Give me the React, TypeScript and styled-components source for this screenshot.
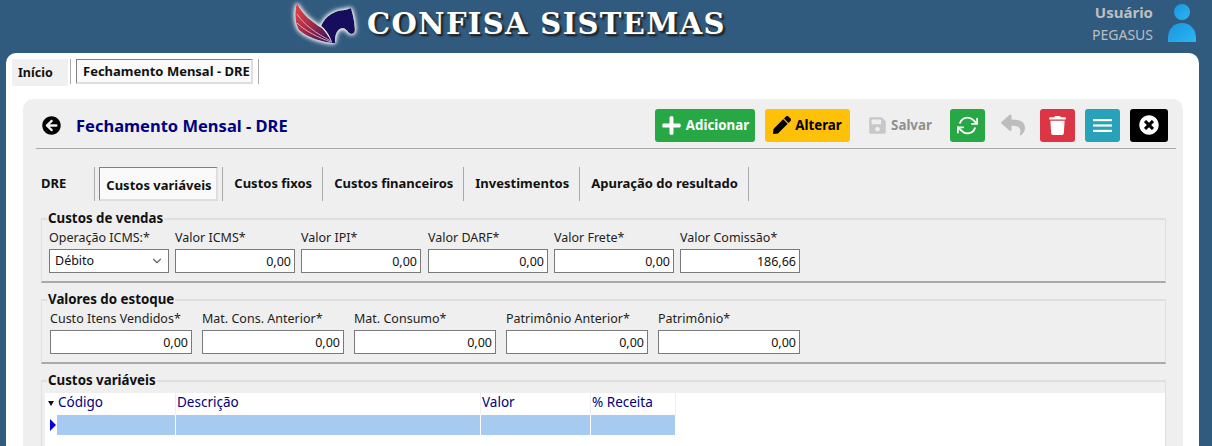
import React from "react";
import styled, { createGlobalStyle } from "styled-components";
import { FaArrowCircleLeft, FaPen, FaPlus, FaReply, FaSave, FaTimesCircle, FaTrash } from "react-icons/fa";
import { FiChevronDown, FiRefreshCw } from "react-icons/fi";

const uiFont = `"Noto Sans", "DejaVu Sans", sans-serif`;

const GlobalStyle = createGlobalStyle`
  html, body {
    margin: 0;
    height: 446px;
    overflow: hidden;
    background: #305a7e;
    font-family: ${uiFont};
  }
  * { box-sizing: border-box; }
`;

const Page = styled.div`
  width: 1212px;
  height: 446px;
  overflow: hidden;
  background: #305a7e;
`;

const Header = styled.header`
  display: flex;
  height: 53px;
  padding-left: 285px;
`;

const Brand = styled.div`
  display: flex;
  align-items: center;
  gap: 2px;
  width: 747px;
  height: 50px;
`;

const BrandName = styled.span`
  font-family: "DejaVu Serif", "Liberation Serif", serif;
  font-size: 29px;
  font-weight: bold;
  letter-spacing: 1.35px;
  color: #fff;
  margin-top: -2px;
  white-space: nowrap;
  text-shadow: 1px 1px 0 #333, 2px 2px 2px #111;
`;

const UserArea = styled.div`
  display: flex;
  margin-left: 60px;
  padding-top: 1px;
  gap: 15px;
`;

const UserText = styled.div`
  width: 61px;
  text-align: right;
  color: #bdbfc1;
  font-size: 14px;
  line-height: 22px;
  white-space: nowrap;
  display: flex;
  flex-direction: column;
  align-items: flex-end;
`;

const UserLabel = styled.strong`
  font-size: 15px;
`;

const UserName = styled.span`
  margin-top: 1px;
`;

const Sheet = styled.main`
  width: 1193px;
  height: 393px;
  margin-left: 6px;
  background: #fff;
  border-radius: 10px 10px 0 0;
  padding: 6px 16px 0 6px;
`;

const TabBar = styled.div`
  display: flex;
  align-items: flex-start;
  height: 40px;
`;

const PlainTab = styled.div`
  display: flex;
  align-items: center;
  width: 56px;
  height: 27px;
  padding-left: 6px;
  font-size: 12.5px;
  font-weight: bold;
  color: #111;
  background: #f0f0f0;
`;

const ActiveTab = styled.div`
  display: flex;
  align-items: center;
  width: 177px;
  height: 25px;
  padding-left: 6px;
  font-size: 13px;
  font-weight: bold;
  color: #111;
  white-space: nowrap;
  background: #fafafa;
  border: solid;
  border-width: 1px 2px 2px 1px;
  border-color: #7f7f7f #dedede #dedede #7f7f7f;
`;

const TabSeparator = styled.span`
  width: 1px;
  height: 25px;
  margin: 0 5px 0 2px;
  background: #aaa;
`;

const EndSeparator = styled(TabSeparator)`
  margin-left: 5px;
`;

const Card = styled.section`
  width: 1160px;
  height: 360px;
  margin-left: 11px;
  background: #efefef;
  border-radius: 10px 10px 0 0;
  padding: 10px 7px 0 13px;
`;

const TitleRow = styled.div`
  display: flex;
  align-items: center;
  height: 40px;
  padding: 0 8px 7px 6px;
  border-bottom: 1px solid #a8a8a8;
`;

const BackIcon = styled(FaArrowCircleLeft)`
  width: 19px;
  height: 19px;
  color: #000;
`;

const Title = styled.h1`
  margin: 0 0 0 15px;
  font-size: 16.5px;
  font-weight: bold;
  color: #000080;
  white-space: nowrap;
`;

const Toolbar = styled.div`
  display: flex;
  gap: 10px;
  margin-left: auto;
`;

const ToolButton = styled.button<{ $bg: string; $fg: string; $w: number }>`
  display: flex;
  align-items: center;
  justify-content: center;
  gap: 4px;
  width: ${(p) => p.$w}px;
  height: 33px;
  padding: 0;
  border: 0;
  border-radius: 3px;
  background: ${(p) => p.$bg};
  color: ${(p) => p.$fg};
  font-family: ${uiFont};
  font-size: 13.3px;
  font-weight: bold;
  white-space: nowrap;
`;

const InnerTabs = styled.div`
  display: flex;
  align-items: center;
  height: 34px;
  margin: 18px 0 17px 5px;
`;

const PageTab = styled.div`
  margin-top: -2px;
  padding: 0 10px 0 11px;
  font-size: 13px;
  font-weight: bold;
  color: #111;
  white-space: nowrap;
`;

const FirstPageTab = styled(PageTab)`
  padding: 0 28px 0 0;
`;

const ActivePageTab = styled.div`
  display: flex;
  align-items: center;
  width: 119px;
  height: 34px;
  margin: 0 4px;
  padding: 2px 0 0 6px;
  font-size: 13px;
  font-weight: bold;
  color: #111;
  white-space: nowrap;
  background: #fafafa;
  border: solid;
  border-width: 1px 2px 2px 1px;
  border-color: #7f7f7f #dedede #dedede #7f7f7f;
`;

const PageSeparator = styled.span`
  width: 1px;
  height: 34px;
  background: #aaa;
`;

const Group = styled.fieldset<{ $h: number; $pl?: number }>`
  position: relative;
  width: 1125px;
  height: ${(p) => p.$h}px;
  margin: 0 0 16px 5px;
  padding: 10px 0 0 ${(p) => p.$pl ?? 8}px;
  border: 0;
  border-top: 2px solid #dfdfdf;
  border-left: 1px solid #dfdfdf;
  border-right: 1px solid #dfdfdf;
  border-bottom: 2px solid #a9a9a9;
  min-width: 0;
`;

const GroupTitle = styled.legend`
  position: absolute;
  top: -10px;
  left: 5px;
  padding: 0 1px;
  background: #efefef;
  font-size: 13.3px;
  line-height: 16px;
  font-weight: bold;
  color: #111;
  white-space: nowrap;
`;

const FieldRow = styled.div`
  display: flex;
  gap: 6px;
`;

const Field = styled.label<{ $w: number; $gap?: number }>`
  display: flex;
  flex-direction: column;
  width: ${(p) => p.$w}px;
  margin-right: ${(p) => p.$gap ?? 0}px;
  font-size: 12.5px;
  line-height: 16px;
  color: #222;
  white-space: nowrap;
`;

const NumberInput = styled.input`
  width: 100%;
  height: 24px;
  margin-top: 3px;
  padding: 0 3px;
  border: 1px solid #7a7a7a;
  background: #fff;
  color: #111;
  font-family: ${uiFont};
  font-size: 12.5px;
  text-align: right;
  outline: none;
`;

const SelectBox = styled.div`
  display: flex;
  align-items: center;
  justify-content: space-between;
  height: 24px;
  margin-top: 3px;
  padding: 0 4px 0 5px;
  border: 1px solid #7a7a7a;
  background: #fff;
  color: #111;
  font-size: 12.5px;
`;

const GridArea = styled.div`
  position: absolute;
  top: 11px;
  left: 3px;
  right: 0;
  height: 60px;
  background: #fff;
`;

const GridRow = styled.div<{ $selected?: boolean }>`
  display: flex;
  height: ${(p) => (p.$selected ? "20px" : "22px")};
  padding-left: 12px;
`;

const GridCell = styled.div<{ $w: number; $selected?: boolean }>`
  width: ${(p) => p.$w}px;
  padding-left: 1px;
  font-size: 13.5px;
  line-height: 19px;
  color: #000080;
  white-space: nowrap;
  background: ${(p) => (p.$selected ? "#a6caf0" : "transparent")};
  border-right: 1px solid ${(p) => (p.$selected ? "#fff" : "#eee")};
`;

const SortMark = styled.span`
  position: absolute;
  left: 3px;
  top: 8px;
  width: 0;
  height: 0;
  border-left: 3px solid transparent;
  border-right: 3px solid transparent;
  border-top: 5px solid #111;
`;

const RowMark = styled.span`
  position: absolute;
  left: 5px;
  top: 26px;
  width: 0;
  height: 0;
  border-top: 6px solid transparent;
  border-bottom: 6px solid transparent;
  border-left: 6px solid #0000e0;
`;

const Logo = () => (
  <svg width="80" height="50" viewBox="0 0 80 50">
    <defs>
      <linearGradient id="wing" x1="0" y1="0" x2="1" y2="1">
        <stop offset="0" stopColor="#ee4444" />
        <stop offset="0.5" stopColor="#a02a48" />
        <stop offset="1" stopColor="#2a0e62" />
      </linearGradient>
      <filter id="glow" x="-20%" y="-20%" width="140%" height="140%">
        <feDropShadow dx="0" dy="0" stdDeviation="2.4" floodColor="#fff" />
        <feDropShadow dx="0" dy="0" stdDeviation="1.4" floodColor="#e4ecf2" />
      </filter>
    </defs>
    <g filter="url(#glow)">
      <path d="M36 26C40 16 50 10 60 10L66 8C68 14 70 24 70 30C70 34 66 35 64 33C61 29 58 27 55 29C52 31 50 34 50 43L47 43C45 36 41 30 36 26Z" fill="#14085e" />
      <path d="M12 3C17 14 27 22 37 28C41 32 45 38 47 43C38 42 22 38 14 30C10 24 9 12 12 3Z" fill="url(#wing)" />
      <path d="M12 14C18 24 32 34 46 41M12 23C20 31 34 38 46 42" fill="none" stroke="#f2dde0" strokeWidth="0.7" />
    </g>
  </svg>
);

const UserIcon = () => (
  <svg width="28" height="42" viewBox="0 0 28 42">
    <defs>
      <linearGradient id="user" x1="0" y1="0" x2="1" y2="1">
        <stop offset="0" stopColor="#1a94e0" />
        <stop offset="1" stopColor="#2cb6f0" />
      </linearGradient>
    </defs>
    <circle cx="14" cy="11" r="8" fill="url(#user)" />
    <path d="M0 41V37C0 28 6 22 14 22s14 6 14 15v4Z" fill="url(#user)" />
  </svg>
);

const MenuIcon = () => (
  <svg width="19" height="15" viewBox="0 0 19 15" fill="#fff">
    <rect y="1" width="19" height="2.2" />
    <rect y="6.4" width="19" height="2.2" />
    <rect y="11.8" width="19" height="2.2" />
  </svg>
);

const pageTabs = ["Custos fixos", "Custos financeiros", "Investimentos", "Apuração do resultado"];

const salesFields = [
  { label: "Valor ICMS*", value: "0,00", gap: 0 },
  { label: "Valor IPI*", value: "0,00", gap: 1 },
  { label: "Valor DARF*", value: "0,00", gap: 0 },
  { label: "Valor Frete*", value: "0,00", gap: 0 },
  { label: "Valor Comissão*", value: "186,66", gap: 0 },
];

const stockFields = [
  "Custo Itens Vendidos*",
  "Mat. Cons. Anterior*",
  "Mat. Consumo*",
  "Patrimônio Anterior*",
  "Patrimônio*",
];

const columns = [
  { label: "Código", w: 119 },
  { label: "Descrição", w: 305 },
  { label: "Valor", w: 110 },
  { label: "% Receita", w: 85 },
];

const App: React.FC = () => (
  <Page>
    <GlobalStyle />
    <Header>
      <Brand>
        <Logo />
        <BrandName>CONFISA SISTEMAS</BrandName>
      </Brand>
      <UserArea>
        <UserText>
          <UserLabel>Usuário</UserLabel>
          <UserName>PEGASUS</UserName>
        </UserText>
        <UserIcon />
      </UserArea>
    </Header>
    <Sheet>
      <TabBar>
        <PlainTab>Início</PlainTab>
        <TabSeparator />
        <ActiveTab>Fechamento Mensal - DRE</ActiveTab>
        <EndSeparator />
      </TabBar>
      <Card>
        <TitleRow>
          <BackIcon />
          <Title>Fechamento Mensal - DRE</Title>
          <Toolbar>
            <ToolButton $bg="#28a745" $fg="#fff" $w={100}>
              <FaPlus size={21} />
              Adicionar
            </ToolButton>
            <ToolButton $bg="#ffc107" $fg="#000" $w={85}>
              <FaPen size={18} />
              Alterar
            </ToolButton>
            <ToolButton $bg="transparent" $fg="#8f8f8f" $w={80}>
              <FaSave size={19} color="#c8c8c8" />
              Salvar
            </ToolButton>
            <ToolButton $bg="#28a745" $fg="#fff" $w={35}>
              <FiRefreshCw size={21} />
            </ToolButton>
            <ToolButton $bg="transparent" $fg="#bdbdbd" $w={35}>
              <FaReply size={24} />
            </ToolButton>
            <ToolButton $bg="#dc3545" $fg="#fff" $w={35}>
              <FaTrash size={19} />
            </ToolButton>
            <ToolButton $bg="#27a2b8" $fg="#fff" $w={35}>
              <MenuIcon />
            </ToolButton>
            <ToolButton $bg="#000" $fg="#fff" $w={38}>
              <FaTimesCircle size={20} />
            </ToolButton>
          </Toolbar>
        </TitleRow>
        <InnerTabs>
          <FirstPageTab>DRE</FirstPageTab>
          <PageSeparator />
          <ActivePageTab>Custos variáveis</ActivePageTab>
          <PageSeparator />
          {pageTabs.map((tab) => (
            <React.Fragment key={tab}>
              <PageTab>{tab}</PageTab>
              <PageSeparator />
            </React.Fragment>
          ))}
        </InnerTabs>
        <Group $h={65} $pl={7}>
          <GroupTitle>Custos de vendas</GroupTitle>
          <FieldRow>
            <Field $w={120}>
              Operação ICMS:*
              <SelectBox>
                Débito
                <FiChevronDown size={14} color="#666" />
              </SelectBox>
            </Field>
            {salesFields.map((field) => (
              <Field $w={120} $gap={field.gap} key={field.label}>
                {field.label}
                <NumberInput readOnly value={field.value} />
              </Field>
            ))}
          </FieldRow>
        </Group>
        <Group $h={65}>
          <GroupTitle>Valores do estoque</GroupTitle>
          <FieldRow>
            {stockFields.map((label) => (
              <Field $w={142} $gap={4} key={label}>
                {label}
                <NumberInput readOnly value="0,00" />
              </Field>
            ))}
          </FieldRow>
        </Group>
        <Group $h={70}>
          <GroupTitle>Custos variáveis</GroupTitle>
          <GridArea>
            <SortMark />
            <RowMark />
            <GridRow>
              {columns.map((col) => (
                <GridCell $w={col.w} key={col.label}>
                  {col.label}
                </GridCell>
              ))}
            </GridRow>
            <GridRow $selected>
              {columns.map((col) => (
                <GridCell $w={col.w} $selected key={col.label} />
              ))}
            </GridRow>
          </GridArea>
        </Group>
      </Card>
    </Sheet>
  </Page>
);

export default App;
